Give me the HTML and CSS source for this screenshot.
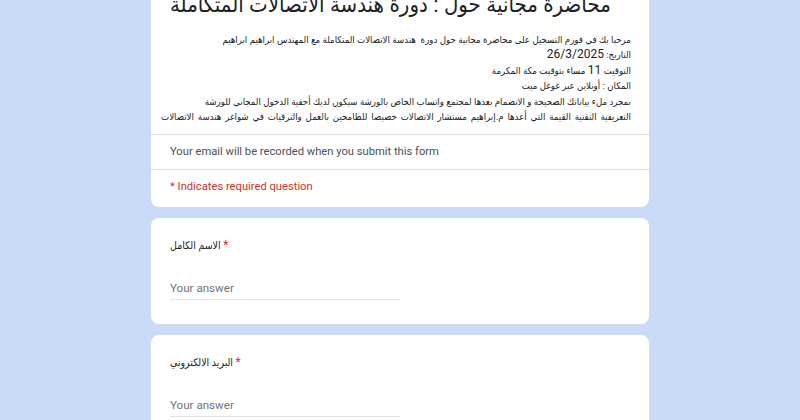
FILE: index.html
```html
<!DOCTYPE html>
<html lang="ar">
<head>
    <meta charset="UTF-8">
    <meta name="viewport" content="width=device-width, initial-scale=1.0">
    <title>محاضرة مجانية حول : دورة هندسة الاتصالات المتكاملة</title>
    <link rel="stylesheet" href="styles.css">
</head>
<body>
    <div class="form-wrap">
        <section class="card header-card">
            <div class="header">
                <h1 class="title">محاضرة مجانية حول : دورة هندسة الاتصالات المتكاملة</h1>
                <div class="desc" dir="rtl">
                    <div>مرحبا بك في فورم التسجيل على محاضرة مجانية حول دورة&nbsp; هندسة الاتصالات المتكاملة مع المهندس ابراهيم ابراهيم</div>
                    <div>التاريخ: <span class="num">26/3/2025</span></div>
                    <div>التوقيت <span class="num">11</span> مساء بتوقيت مكة المكرمة</div>
                    <div>المكان : أونلاين عبر غوغل ميت</div>
                    <div>بمجرد ملء بياناتك الصحيحة و الانضمام بعدها لمجتمع واتساب الخاص بالورشة سيكون لديك أحقية الدخول المجاني للورشة</div>
                    <div class="wide">التعريفية التقنية القيمة التي أعدها م.إبراهيم مستشار الاتصالات خصيصا للطامحين بالعمل والترقيات في شواغر هندسة الاتصالات</div>
                </div>
            </div>
            <div class="email-row">Your email will be recorded when you submit this form</div>
            <div class="req-row">* Indicates required question</div>
        </section>

        <section class="card question">
            <div class="q-label">الاسم الكامل <span class="star">*</span></div>
            <div class="answer">Your answer</div>
        </section>

        <section class="card question">
            <div class="q-label">البريد الالكتروني <span class="star">*</span></div>
            <div class="answer">Your answer</div>
        </section>
    </div>
</body>
</html>
```

FILE: styles.css
```css
body {
    font-family: Roboto, "DejaVu Sans Condensed", "DejaVu Sans", sans-serif;
    margin: 0;
    padding: 0;
    background-color: #c9dbf6;
    color: #202124;
}
.form-wrap {
    width: 498px;
    margin: -22px auto 0;
}
.card {
    background: #ffffff;
    border-radius: 8px;
    margin-bottom: 11px;
}
.header {
    padding: 12px 18px 10px 19px;
}
.title {
    font-size: 22px;
    font-weight: 400;
    line-height: 30px;
    margin: 0 0 12px;
    white-space: nowrap;
}
.desc {
    font-size: 9.6px;
    line-height: 15.4px;
    text-align: right;
    white-space: nowrap;
}
.desc .wide {
    word-spacing: 1.5px;
}
.desc .num {
    font-size: 12px;
}
.email-row {
    border-top: 1px solid #dadce0;
    height: 34px;
    line-height: 34px;
    padding: 0 19px;
    font-size: 11.2px;
    color: #4d5156;
}
.req-row {
    border-top: 1px solid #dadce0;
    height: 37px;
    line-height: 34px;
    padding: 0 19px;
    font-size: 11.2px;
    color: #d93025;
}
.question {
    padding: 19px 19px 24px;
}
.q-label {
    font-size: 10.5px;
    line-height: 17px;
}
.star {
    color: #d93025;
    font-size: 12px;
}
.answer {
    width: 230px;
    margin-top: 24px;
    height: 21px;
    line-height: 21px;
    font-size: 11.6px;
    color: #70757a;
    border-bottom: 1px solid #e3e5e8;
}
```
